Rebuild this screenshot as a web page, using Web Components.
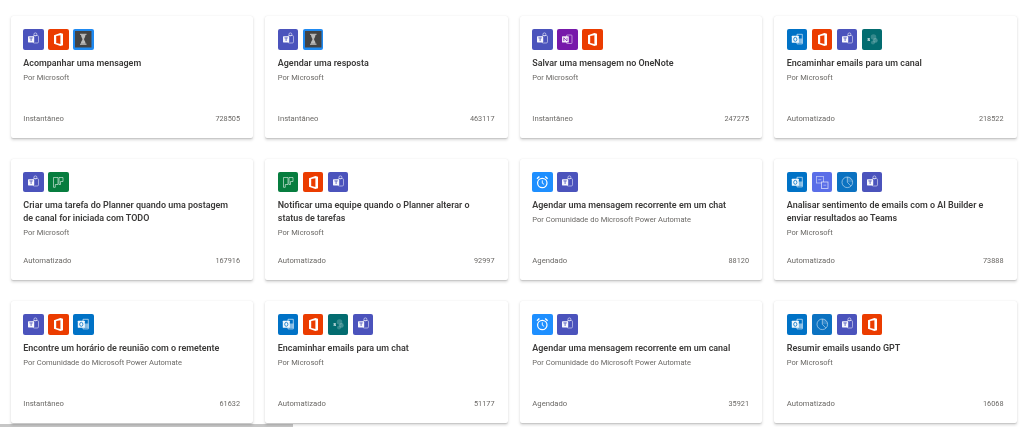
<!DOCTYPE html>
<html lang="pt-BR"><head><meta charset="utf-8"><title>Modelos</title>
<style>
html,body{margin:0;padding:0;background:#fff;overflow:hidden;height:427px}
body{font-family:"Open Sans","Noto Sans",sans-serif}
</style></head><body>
<template-gallery></template-gallery>
<script>
const glyphs={
teams:`<rect x="10" y="6.5" width="5.5" height="7.5" rx="1.2" fill="none" stroke="#fff" stroke-opacity=".5" stroke-width="1"/><circle cx="12.4" cy="5.4" r="1.5" fill="none" stroke="#fff" stroke-opacity=".55"/><rect x="5" y="7.2" width="6.2" height="6.2" rx=".6" fill="#fff" fill-opacity=".95"/><path d="M6.4 8.9h3.4M8.1 8.9v3.1" stroke="#4b53bc" stroke-width=".8"/>`,
office:`<path d="M6 6.300 12.400 4 15 4.800v11.400L12.400 17 6 14.700zM12.400 6.200 8.200 7.100v6.800l4.200 1z" fill="#fff" fill-rule="evenodd"/>`,
hourglass:`<rect x="2" y="2" width="16.500" height="16.500" fill="#444"/><path d="M7 5.300h6.500M7 15.200h6.500" stroke="#ddd" stroke-width=".9"/><path d="M8 5.800h4.500c0 2.600-1.400 3-1.400 4.400s1.400 1.600 1.400 4.600H8c0-3 1.400-3.200 1.400-4.600S8 8.400 8 5.800z" fill="#bbb"/>`,
onenote:`<rect x="9.500" y="6" width="5.500" height="8.500" rx=".8" fill="none" stroke="#fff" stroke-opacity=".5"/><rect x="5" y="7.200" width="6.800" height="6.400" rx=".6" fill="#fff" fill-opacity=".9"/><path d="M6.800 12V8.800l3.200 3.200V8.800" fill="none" stroke="#7719aa" stroke-width=".7"/>`,
outlook:`<path d="M10 5.300h5.300v9.600H10z" fill="none" stroke="#fff" stroke-opacity=".6"/><path d="M11 9.500h4.500v4.500H11z" fill="#fff" fill-opacity=".5"/><rect x="4.800" y="6.800" width="7" height="7" rx=".5" fill="#fff" fill-opacity=".95"/><ellipse cx="8.300" cy="10.300" rx="1.600" ry="2" fill="none" stroke="#0072c6" stroke-width=".8"/>`,
sharepoint:`<circle cx="11.500" cy="8" r="2.800" fill="#fff" fill-opacity=".2"/><circle cx="13.400" cy="11.400" r="2.300" fill="#fff" fill-opacity=".25"/><circle cx="11" cy="13.400" r="2" fill="#fff" fill-opacity=".2"/><text x="5.200" y="12.400" font-family="Open Sans,sans-serif" font-size="6" font-weight="700" fill="#fff" fill-opacity=".85">s</text>`,
planner:`<path d="M5.500 5.500h4.500v7H7.300v2.800H5.500zM11 5.500h4v4h-2.500v3H11z" fill="none" stroke="#fff" stroke-opacity=".55" stroke-width="1"/>`,
alarm:`<circle cx="10.300" cy="11" r="4.700" fill="none" stroke="#fff" stroke-width="1.200"/><path d="M10.300 8.300v2.900l1.800 1.100" fill="none" stroke="#fff" stroke-width=".9"/><path d="M5 6.800 7.400 4.600M15.600 6.800l-2.400-2.200" stroke="#fff" stroke-width="1.400"/>`,
ai:`<rect x="4.500" y="4.500" width="7" height="6.500" fill="none" stroke="#fff" stroke-opacity=".6" stroke-width=".8"/><rect x="9.500" y="10" width="6.500" height="6.500" fill="#5a6ee8" stroke="#fff" stroke-opacity=".75" stroke-width=".8"/><path d="M6.200 7.700h3.200M11.400 13.200h2.800" stroke="#fff" stroke-width=".7" stroke-opacity=".6"/>`,
clock:`<circle cx="10.300" cy="10.300" r="5.300" fill="none" stroke="#fff" stroke-opacity=".55" stroke-width=".9"/><path d="M10.300 5v5.300H15.600A5.300 5.300 0 0 0 10.300 5z" fill="#fff" fill-opacity=".16"/><path d="M10.300 5v5.300l3.500 3.600" fill="none" stroke="#fff" stroke-opacity=".6" stroke-width=".8"/>`
};
const bg={teams:'#4b53bc',office:'#eb3c00',hourglass:'#1f8af2',onenote:'#7719aa',outlook:'#0072c6',sharepoint:'#036c70',planner:'#077d3f',alarm:'#1e8fff',ai:'#5a6ee8',clock:'#0b72c1'};
class FlowIcon extends HTMLElement{
  connectedCallback(){
    const k=this.getAttribute('name');
    this.attachShadow({mode:'open'}).innerHTML=`<style>:host{display:block;width:20.5px;height:20.5px;flex:none}
    svg{display:block;width:100%;height:100%;border-radius:2px;background:${bg[k]}}</style>
    <svg viewBox="0 0 20.5 20.5" role="img" aria-label="${k}">${glyphs[k]}</svg>`;
  }
}
customElements.define('flow-icon',FlowIcon);

class TemplateCard extends HTMLElement{
  connectedCallback(){
    const a=n=>this.getAttribute(n);
    const icons=a('icons').split(' ').map(i=>`<flow-icon name="${i}"></flow-icon>`).join('');
    this.attachShadow({mode:'open'}).innerHTML=`<style>
    :host{display:flex;flex-direction:column;box-sizing:border-box;height:121.5px;padding:13px 13px 14px 12.8px;background:#fff;border-radius:2px;
      box-shadow:0 1.2px 3px rgba(0,0,0,.16),0 .3px .9px rgba(0,0,0,.1);color:#323130;font-family:Roboto,"Open Sans",sans-serif}
    .icons{display:flex;gap:4.5px;margin-bottom:7px}
    .title{font-size:8.95px;line-height:13px;font-weight:600;color:#3b3a39}
    .by{font-size:7.55px;line-height:11px;color:#6b6966;margin-top:2px}
    .foot{margin-top:auto;display:flex;justify-content:space-between;font-size:7.7px;line-height:11px;color:#6b6966}
    .n{font-size:7.3px}
    </style><div class="icons">${icons}</div><div class="title"><slot></slot></div><div class="by">${a('by')}</div>
    <div class="foot"><span>${a('kind')}</span><span class="n">${a('count')}</span></div>`;
  }
}
customElements.define('template-card',TemplateCard);

const MS='Por Microsoft',CM='Por Comunidade do Microsoft Power Automate';
const data=[
['teams office hourglass','Acompanhar uma mensagem',MS,'Instantâneo','728505'],
['teams hourglass','Agendar uma resposta',MS,'Instantâneo','463117'],
['teams onenote office','Salvar uma mensagem no OneNote',MS,'Instantâneo','247275'],
['outlook office teams sharepoint','Encaminhar emails para um canal',MS,'Automatizado','218522'],
['teams planner','Criar uma tarefa do Planner quando uma postagem de canal for iniciada com TODO',MS,'Automatizado','167916'],
['planner office teams','Notificar uma equipe quando o Planner alterar o status de tarefas',MS,'Automatizado','92997'],
['alarm teams','Agendar uma mensagem recorrente em um chat',CM,'Agendado','88120'],
['outlook ai clock teams','Analisar sentimento de emails com o AI Builder e enviar resultados ao Teams',MS,'Automatizado','73888'],
['teams office outlook','Encontre um horário de reunião com o remetente',CM,'Instantâneo','61632'],
['outlook office sharepoint teams','Encaminhar emails para um chat',MS,'Automatizado','51177'],
['alarm teams','Agendar uma mensagem recorrente em um canal',CM,'Agendado','35921'],
['outlook clock teams office','Resumir emails usando GPT',MS,'Automatizado','16068']];

class TemplateGallery extends HTMLElement{
  connectedCallback(){
    const s=this.attachShadow({mode:'open'});
    s.innerHTML=`<style>
    :host{display:block;height:427px;overflow:hidden;filter:blur(.3px)}
    .grid{display:grid;grid-template-columns:repeat(4,242.5px);column-gap:12px;row-gap:21px;padding:16px 0 0 10.5px}
    .bar{height:3px;width:293px;background:#c6c6c6;margin-top:1.5px}
    </style><div class="grid"></div><div class="bar"></div>`;
    const g=s.querySelector('.grid');
    for(const [icons,t,by,kind,count] of data){
      const c=document.createElement('template-card');
      c.setAttribute('icons',icons);c.setAttribute('by',by);c.setAttribute('kind',kind);c.setAttribute('count',count);
      c.textContent=t;g.appendChild(c);
    }
  }
}
customElements.define('template-gallery',TemplateGallery);
</script>
</body></html>
